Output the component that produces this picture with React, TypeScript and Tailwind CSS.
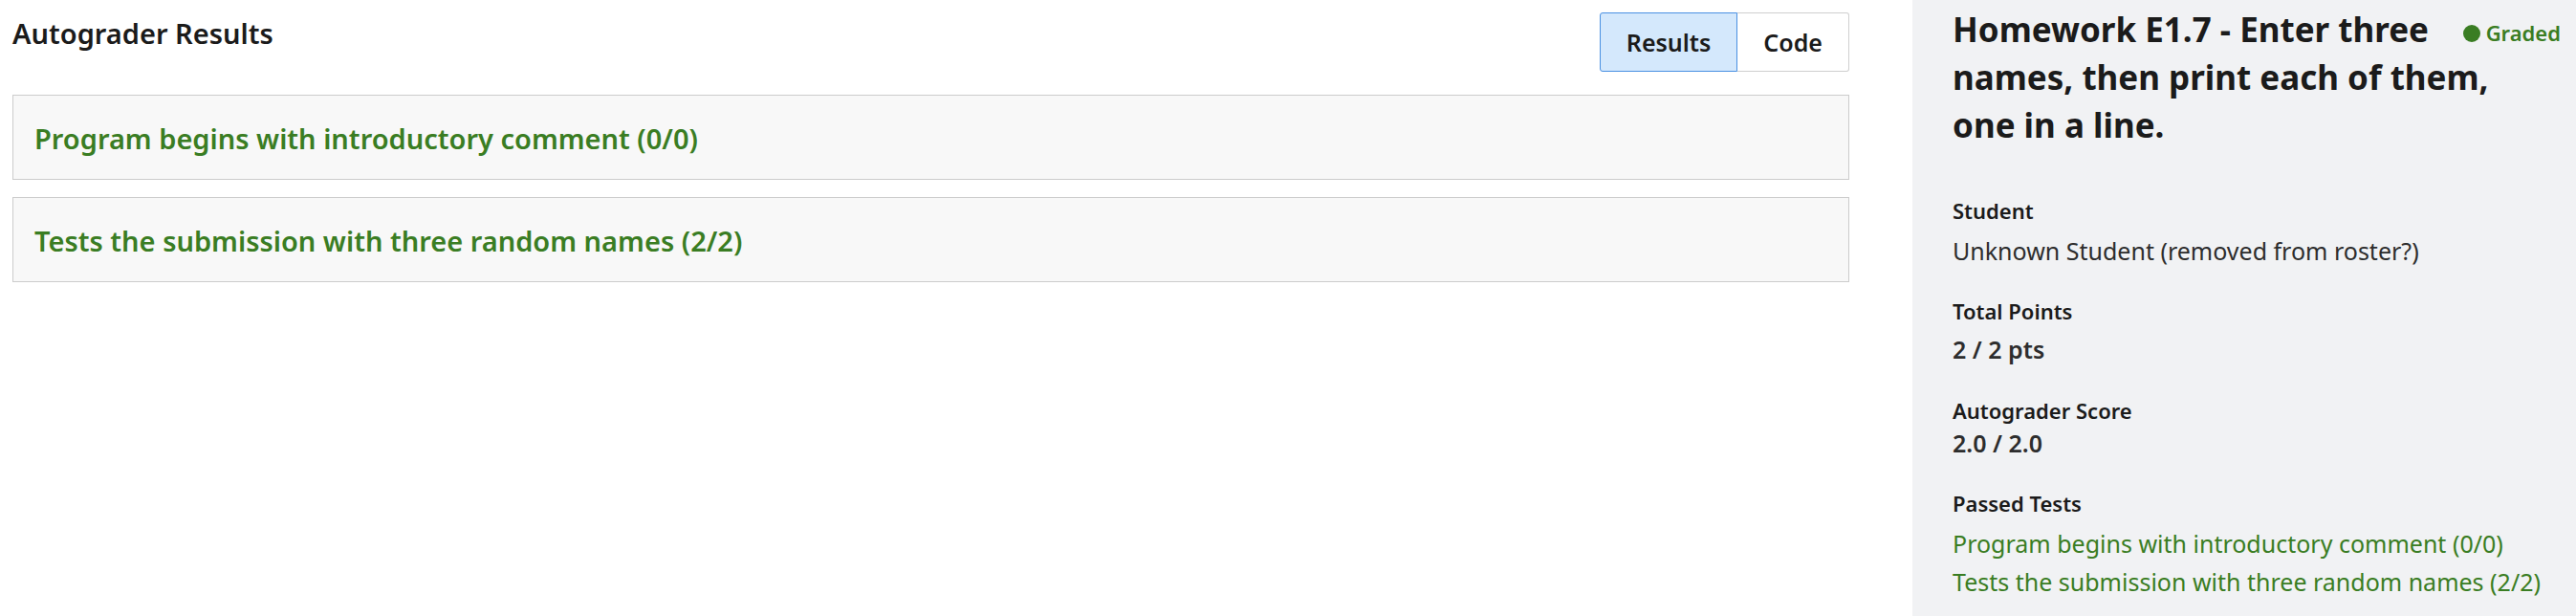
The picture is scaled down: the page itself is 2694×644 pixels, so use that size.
import React from 'react';

const tests = [
    { name: 'Program begins with introductory comment', score: '(0/0)' },
    { name: 'Tests the submission with three random names', score: '(2/2)' }
];

export default function App() {
    return (
        <div className="flex min-h-[644px] bg-white font-['Noto_Sans','Open_Sans',sans-serif] text-[#1b1b1b]">
            {/* Results column */}
            <main className="flex-1 pl-[13px] pr-[66px]">
                <div className="flex items-start justify-between pt-[13px]">
                    <h2 className="text-[29px] leading-[44px] font-semibold">Autograder Results</h2>
                    <div className="flex">
                        <button className="px-[27px] py-[11px] text-[25px] leading-[38px] font-semibold bg-[#d4e8fc] border border-[#4a90e2] rounded-l-[3px]">
                            Results
                        </button>
                        <button className="px-[27px] py-[11px] text-[25px] leading-[38px] font-semibold bg-white border border-l-0 border-[#cfcfcf] rounded-r-[3px]">
                            Code
                        </button>
                    </div>
                </div>

                <div className="mt-[24px] space-y-[18px]">
                    {tests.map(t => (
                        <div key={t.name} className="bg-[#f8f8f8] border border-[#cccccc] pl-[22px] pt-[23px] pb-[20px]">
                            <h3 className="text-[29px] leading-[44px] font-semibold text-[#3a7d23]">
                                {t.name} {t.score}
                            </h3>
                        </div>
                    ))}
                </div>
            </main>

            {/* Submission sidebar */}
            <aside className="w-[694px] shrink-0 bg-[#f1f2f4] pl-[42px] pr-[16px] pt-[6px]">
                <div>
                    <div className="float-right mt-[12px] ml-[20px] flex items-center gap-[6px] text-[22px] leading-[33px] font-semibold text-[#3a7d23]">
                        <span className="w-[18px] h-[18px] rounded-full bg-[#3a7d23]" />
                        Graded
                    </div>
                    <h1 className="pr-[12px] text-[35px] leading-[50px] font-bold">
                        Homework E1.7 - Enter three names, then print each of them, one in a line.
                    </h1>
                </div>

                <div className="mt-[48px]">
                    <div className="text-[22px] leading-[33px] font-semibold">Student</div>
                    <div className="mt-[6px] text-[25px] leading-[38px] text-[#2d2d2d]">
                        Unknown Student (removed from roster?)
                    </div>
                </div>

                <div className="mt-[28px]">
                    <div className="text-[22px] leading-[33px] font-semibold">Total Points</div>
                    <div className="mt-[4px] text-[25px] leading-[38px] font-semibold text-[#2d2d2d]">2 / 2 pts</div>
                </div>

                <div className="mt-[29px]">
                    <div className="text-[22px] leading-[33px] font-semibold">Autograder Score</div>
                    <div className="-mt-[2px] text-[25px] leading-[38px] font-semibold text-[#2d2d2d]">2.0 / 2.0</div>
                </div>

                <div className="mt-[28px]">
                    <div className="text-[22px] leading-[33px] font-semibold">Passed Tests</div>
                    <ul className="mt-[5px]">
                        {tests.map(t => (
                            <li key={t.name} className="text-[25px] leading-[40px] text-[#3a7d23]">
                                {t.name} {t.score}
                            </li>
                        ))}
                    </ul>
                </div>
            </aside>
        </div>
    );
}
